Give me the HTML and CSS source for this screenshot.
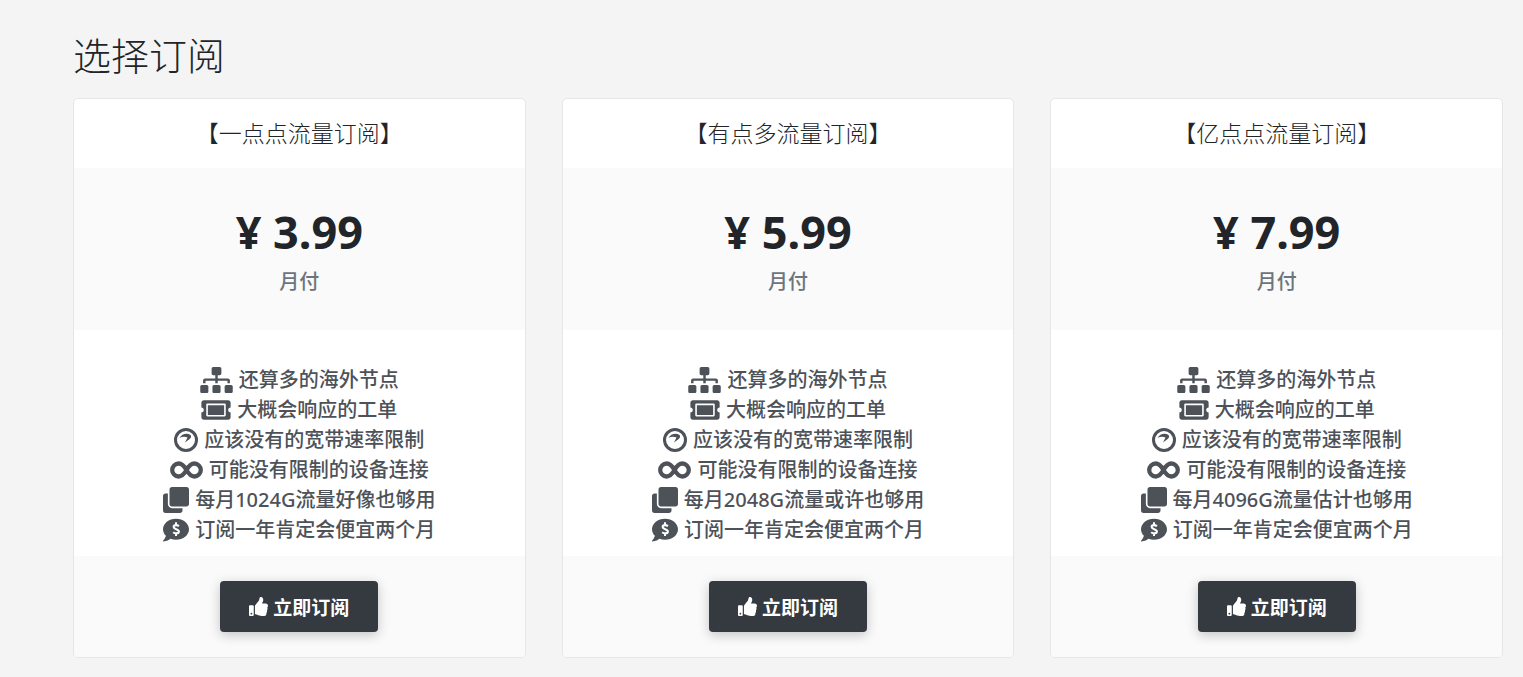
FILE: index.html
```html
<!DOCTYPE html>
<html lang="zh-CN">
<head>
<meta charset="utf-8">
<title>选择订阅</title>
<link rel="stylesheet" href="styles.css">
</head>
<body>
<svg class="sprite" aria-hidden="true">
  <symbol id="sitemap" viewBox="0 0 640 512"><path d="M128 352H32c-17.67 0-32 14.33-32 32v96c0 17.67 14.33 32 32 32h96c17.67 0 32-14.33 32-32v-96c0-17.67-14.33-32-32-32zm-24-80h192v48h48v-48h192v48h48v-57.59c0-21.17-17.23-38.41-38.41-38.41H344v-64h40c17.67 0 32-14.33 32-32V32c0-17.67-14.33-32-32-32H256c-17.67 0-32 14.33-32 32v96c0 17.67 14.33 32 32 32h40v64H94.41C73.23 224 56 241.23 56 262.41V320h48v-48zm264 80h-96c-17.67 0-32 14.33-32 32v96c0 17.67 14.33 32 32 32h96c17.67 0 32-14.33 32-32v-96c0-17.67-14.33-32-32-32zm240 0h-96c-17.67 0-32 14.33-32 32v96c0 17.67 14.33 32 32 32h96c17.67 0 32-14.33 32-32v-96c0-17.67-14.33-32-32-32z"/></symbol>
  <symbol id="ticket" viewBox="0 0 576 512"><path d="M128 160h320v192H128V160zm400 96c0 26.51 21.49 48 48 48v96c0 26.51-21.49 48-48 48H48c-26.51 0-48-21.49-48-48v-96c26.51 0 48-21.49 48-48s-21.49-48-48-48v-96c0-26.51 21.49-48 48-48h480c26.51 0 48 21.49 48 48v96c-26.51 0-48 21.49-48 48zm-48-104c0-13.255-10.745-24-24-24H120c-13.255 0-24 10.745-24 24v208c0 13.255 10.745 24 24 24h336c13.255 0 24-10.745 24-24V152z"/></symbol>
  <symbol id="gauge" viewBox="0 0 24 24"><circle cx="12" cy="12" r="10.500" fill="none" stroke="currentColor" stroke-width="3"/><path d="M5.500 10C7.500 6 13 4.500 16.500 7c1.200 1.200.6 2.800-.8 4L11 14.500l2.500-5C11 8.300 8 8.500 5.500 10z"/></symbol>
  <symbol id="infinity" viewBox="0 0 33 26"><path d="M16.500 13C14.500 9.500 12 6.500 8.700 6.500a6.500 6.500 0 0 0 0 13c3.300 0 5.800-3 7.800-6.500s4.500-6.500 7.800-6.500a6.500 6.500 0 0 1 0 13c-3.300 0-5.800-3-7.800-6.500z" fill="none" stroke="currentColor" stroke-width="4.300"/></symbol>
  <symbol id="clone" viewBox="0 0 512 512"><path d="M464 0c26.51 0 48 21.49 48 48v288c0 26.51-21.49 48-48 48H176c-26.51 0-48-21.49-48-48V48c0-26.51 21.49-48 48-48h288M176 416c-44.112 0-80-35.888-80-80V128H48c-26.51 0-48 21.49-48 48v288c0 26.51 21.49 48 48 48h288c26.51 0 48-21.49 48-48v-48H176z"/></symbol>
  <symbol id="comment" viewBox="0 0 512 512"><path d="M256 32C114.6 32 0 125.1 0 240c0 49.6 21.4 95 57 130.7C44.500 421.1 2.700 466 2.200 466.500c-2.200 2.300-2.800 5.700-1.500 8.700S4.800 480 8 480c66.3 0 116-31.8 140.6-51.4 32.7 12.3 69 19.4 107.4 19.4 141.4 0 256-93.1 256-208S397.4 32 256 32z"/><path d="M313 180c-18-16-36-20-56-20-30 0-48 14-48 36 0 52 104 36 104 90 0 24-20 36-50 36-22 0-44-6-62-22M256 104v56M256 320v56" fill="none" stroke="#fff" stroke-width="40"/></symbol>
  <symbol id="thumb" viewBox="0 0 512 512"><path d="M104 224H24c-13.255 0-24 10.745-24 24v240c0 13.255 10.745 24 24 24h80c13.255 0 24-10.745 24-24V248c0-13.255-10.745-24-24-24zM64 472c-13.255 0-24-10.745-24-24s10.745-24 24-24 24 10.745 24 24-10.745 24-24 24zM384 81.452c0 42.416-25.97 66.208-33.277 94.548h101.723c33.397 0 59.397 27.746 59.553 58.098.084 17.938-7.546 37.249-19.439 49.197l-.11.11c9.836 23.337 8.237 56.037-9.308 79.469 8.681 25.895-.069 57.704-16.382 74.757 4.298 17.598 2.244 32.575-6.148 44.632C440.202 511.587 389.616 512 346.839 512l-2.845-.001c-48.287-.017-87.806-17.598-119.56-31.725-15.957-7.099-36.821-15.887-52.651-16.178-6.54-.12-11.783-5.457-11.783-11.998v-213.77c0-3.2 1.282-6.271 3.558-8.521 39.614-39.144 56.648-80.587 89.117-113.111 14.804-14.832 20.188-37.236 25.393-58.902C282.515 39.293 291.817 0 312 0c24 0 72 8 72 81.452z"/></symbol>
</svg>
<main class="page">
  <h1 class="page-title">选择订阅</h1>
  <div class="plans">
    <section class="card">
      <h2 class="card-title">【一点点流量订阅】</h2>
      <div class="pricing">
        <p class="price">¥ 3.99</p>
        <p class="period">月付</p>
      </div>
      <ul class="features">
        <li><svg class="icon wide"><use href="#sitemap"/></svg>还算多的海外节点</li>
        <li><svg class="icon ticket"><use href="#ticket"/></svg>大概会响应的工单</li>
        <li><svg class="icon gauge"><use href="#gauge"/></svg>应该没有的宽带速率限制</li>
        <li><svg class="icon wide"><use href="#infinity"/></svg>可能没有限制的设备连接</li>
        <li><svg class="icon"><use href="#clone"/></svg>每月1024G流量好像也够用</li>
        <li><svg class="icon"><use href="#comment"/></svg>订阅一年肯定会便宜两个月</li>
      </ul>
      <div class="card-footer"><button class="subscribe" type="button"><svg class="thumb"><use href="#thumb"/></svg>立即订阅</button></div>
    </section>
    <section class="card">
      <h2 class="card-title">【有点多流量订阅】</h2>
      <div class="pricing">
        <p class="price">¥ 5.99</p>
        <p class="period">月付</p>
      </div>
      <ul class="features">
        <li><svg class="icon wide"><use href="#sitemap"/></svg>还算多的海外节点</li>
        <li><svg class="icon ticket"><use href="#ticket"/></svg>大概会响应的工单</li>
        <li><svg class="icon gauge"><use href="#gauge"/></svg>应该没有的宽带速率限制</li>
        <li><svg class="icon wide"><use href="#infinity"/></svg>可能没有限制的设备连接</li>
        <li><svg class="icon"><use href="#clone"/></svg>每月2048G流量或许也够用</li>
        <li><svg class="icon"><use href="#comment"/></svg>订阅一年肯定会便宜两个月</li>
      </ul>
      <div class="card-footer"><button class="subscribe" type="button"><svg class="thumb"><use href="#thumb"/></svg>立即订阅</button></div>
    </section>
    <section class="card">
      <h2 class="card-title">【亿点点流量订阅】</h2>
      <div class="pricing">
        <p class="price">¥ 7.99</p>
        <p class="period">月付</p>
      </div>
      <ul class="features">
        <li><svg class="icon wide"><use href="#sitemap"/></svg>还算多的海外节点</li>
        <li><svg class="icon ticket"><use href="#ticket"/></svg>大概会响应的工单</li>
        <li><svg class="icon gauge"><use href="#gauge"/></svg>应该没有的宽带速率限制</li>
        <li><svg class="icon wide"><use href="#infinity"/></svg>可能没有限制的设备连接</li>
        <li><svg class="icon"><use href="#clone"/></svg>每月4096G流量估计也够用</li>
        <li><svg class="icon"><use href="#comment"/></svg>订阅一年肯定会便宜两个月</li>
      </ul>
      <div class="card-footer"><button class="subscribe" type="button"><svg class="thumb"><use href="#thumb"/></svg>立即订阅</button></div>
    </section>
  </div>
</main>
</body>
</html>
```
FILE: styles.css
```css
* { box-sizing: border-box; }

body {
  margin: 0;
  background: #f4f4f4;
  color: #212529;
  font-family: "Noto Sans", "Noto Sans CJK SC", sans-serif;
}

h1, h2, p, ul { margin: 0; padding: 0; }

.sprite { position: absolute; width: 0; height: 0; }

.page { padding: 30px 20px 18px 73px; }

.page-title {
  margin-bottom: 20px;
  font-family: "Noto Sans CJK SC", sans-serif;
  font-size: 38px;
  font-weight: 300;
  line-height: 48px;
}

.plans {
  display: grid;
  grid-template-columns: repeat(3, 1fr);
  gap: 36px;
}

.card {
  overflow: hidden;
  border: 1px solid #e6e6e6;
  border-radius: 5px;
  background: #fff;
  text-align: center;
}

.card-title {
  padding: 19px 20px 21px;
  font-family: "Noto Sans CJK SC", sans-serif;
  font-size: 23px;
  font-weight: 300;
  line-height: 29px;
}

.pricing {
  padding: 34px 20px 33px;
  background: #fafafa;
}

.price {
  font-size: 45px;
  font-weight: 700;
  line-height: 60px;
}

.period {
  padding-top: 5px;
  color: #6c757d;
  font-size: 20px;
  font-weight: 500;
  line-height: 30px;
}

.features {
  padding: 35px 20px 11px;
  color: #4d5259;
  font-size: 20px;
  font-weight: 500;
  line-height: 30px;
  list-style: none;
}

.features li {
  display: flex;
  align-items: center;
  justify-content: center;
  gap: 6px;
  height: 30px;
}

.icon {
  flex: none;
  width: 26px;
  height: 26px;
  fill: currentColor;
}

.icon.wide { width: 33px; }
.icon.ticket { width: 30px; }
.icon.gauge { width: 24px; height: 24px; }

.card-footer {
  padding: 25px 20px;
  background: #fafafa;
}

.subscribe {
  display: inline-flex;
  align-items: center;
  gap: 5px;
  padding: 11px 29px;
  border: 0;
  border-radius: 4px;
  background: #343a40;
  box-shadow: 0 3px 12px rgba(0, 0, 0, 0.22);
  color: #fff;
  font: 700 19px/29px "Noto Sans CJK SC", sans-serif;
  vertical-align: top;
}

.thumb {
  width: 19px;
  height: 19px;
  fill: currentColor;
}
```
